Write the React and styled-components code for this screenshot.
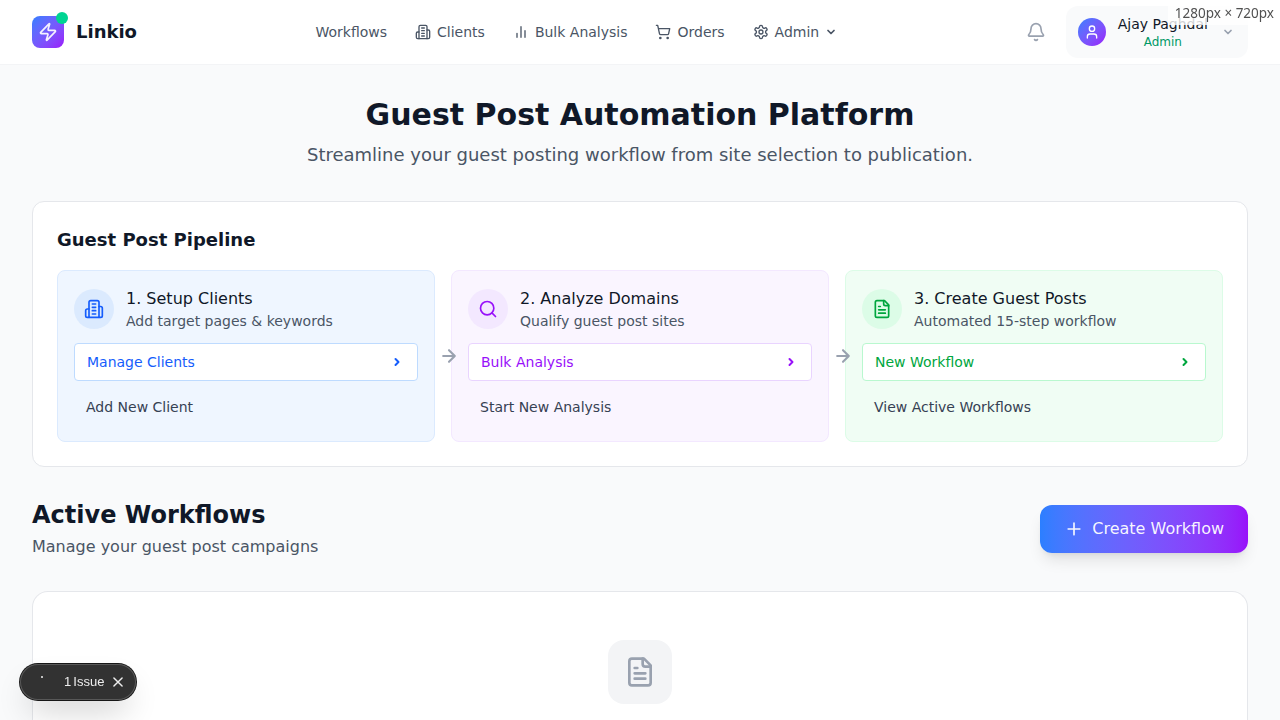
import React from "react";
import styled, { createGlobalStyle } from "styled-components";

const GlobalStyle = createGlobalStyle`
  *, *::before, *::after { box-sizing: border-box; }
  body {
    margin: 0;
    height: 720px;
    overflow: hidden;
    background: #f9fafb;
    color: #101828;
    font-family: "DejaVu Sans", sans-serif;
    font-size: 16px;
    line-height: 24px;
  }
  h1, h2, h3, p { margin: 0; }
  svg { display: block; flex: none; }
`;

const tones = {
  blue: { bg: "#eff6ff", soft: "#dbeafe", line: "#bedbff", ink: "#155dfc" },
  purple: { bg: "#faf5ff", soft: "#f3e8ff", line: "#e9d4ff", ink: "#9810fa" },
  green: { bg: "#f0fdf4", soft: "#dcfce7", line: "#b9f8cf", ink: "#00a63e" },
};

const paths = {
  zap: <path d="M4 14a1 1 0 0 1-.78-1.63l9.9-10.2a.5.5 0 0 1 .86.46l-1.92 6.02A1 1 0 0 0 13 10h7a1 1 0 0 1 .78 1.63l-9.9 10.2a.5.5 0 0 1-.86-.46l1.92-6.02A1 1 0 0 0 11 14z" />,
  building: (
    <>
      <path d="M6 22V4a2 2 0 0 1 2-2h8a2 2 0 0 1 2 2v18Z" />
      <path d="M6 12H4a2 2 0 0 0-2 2v6a2 2 0 0 0 2 2h2" />
      <path d="M18 9h2a2 2 0 0 1 2 2v9a2 2 0 0 1-2 2h-2" />
      <path d="M10 6h4M10 10h4M10 14h4M10 18h4" />
    </>
  ),
  bars: <path d="M18 20V10M12 20V4M6 20v-6" />,
  cart: (
    <>
      <circle cx="8" cy="21" r="1" />
      <circle cx="19" cy="21" r="1" />
      <path d="M2.05 2.05h2l2.66 12.42a2 2 0 0 0 2 1.58h9.78a2 2 0 0 0 1.95-1.57l1.65-7.43H5.12" />
    </>
  ),
  settings: (
    <>
      <path d="M12.22 2h-.44a2 2 0 0 0-2 2v.18a2 2 0 0 1-1 1.73l-.43.25a2 2 0 0 1-2 0l-.15-.08a2 2 0 0 0-2.73.73l-.22.38a2 2 0 0 0 .73 2.73l.15.1a2 2 0 0 1 1 1.72v.51a2 2 0 0 1-1 1.74l-.15.09a2 2 0 0 0-.73 2.73l.22.38a2 2 0 0 0 2.73.73l.15-.08a2 2 0 0 1 2 0l.43.25a2 2 0 0 1 1 1.73V20a2 2 0 0 0 2 2h.44a2 2 0 0 0 2-2v-.18a2 2 0 0 1 1-1.73l.43-.25a2 2 0 0 1 2 0l.15.08a2 2 0 0 0 2.73-.73l.22-.39a2 2 0 0 0-.73-2.73l-.15-.08a2 2 0 0 1-1-1.74v-.5a2 2 0 0 1 1-1.74l.15-.09a2 2 0 0 0 .73-2.73l-.22-.38a2 2 0 0 0-2.73-.73l-.15.08a2 2 0 0 1-2 0l-.43-.25a2 2 0 0 1-1-1.73V4a2 2 0 0 0-2-2z" />
      <circle cx="12" cy="12" r="3" />
    </>
  ),
  chevronDown: <path d="m6 9 6 6 6-6" />,
  chevronRight: <path d="m9 18 6-6-6-6" />,
  arrowRight: <path d="M5 12h14m-7-7 7 7-7 7" />,
  bell: (
    <>
      <path d="M10.268 21a2 2 0 0 0 3.464 0" />
      <path d="M3.262 15.326A1 1 0 0 0 4 17h16a1 1 0 0 0 .74-1.673C19.41 13.956 18 12.499 18 8A6 6 0 0 0 6 8c0 4.499-1.411 5.956-2.738 7.326" />
    </>
  ),
  user: (
    <>
      <path d="M19 21v-2a4 4 0 0 0-4-4H9a4 4 0 0 0-4 4v2" />
      <circle cx="12" cy="7" r="4" />
    </>
  ),
  search: (
    <>
      <circle cx="11" cy="11" r="8" />
      <path d="m21 21-4.3-4.3" />
    </>
  ),
  file: (
    <>
      <path d="M15 2H6a2 2 0 0 0-2 2v16a2 2 0 0 0 2 2h12a2 2 0 0 0 2-2V7Z" />
      <path d="M14 2v4a2 2 0 0 0 2 2h4M10 9H8M16 13H8M16 17H8" />
    </>
  ),
  plus: <path d="M5 12h14M12 5v14" />,
  close: <path d="M5 5l14 14M19 5 5 19" />,
};

function Icon({ name, size = 16, stroke = 2 }) {
  return (
    <svg width={size} height={size} viewBox="0 0 24 24" fill="none" stroke="currentColor"
      strokeWidth={stroke} strokeLinecap="round" strokeLinejoin="round" aria-hidden="true">
      {paths[name]}
    </svg>
  );
}

const Header = styled.header`
  display: flex;
  align-items: center;
  justify-content: space-between;
  height: 65px;
  padding: 0 32px;
  background: #fff;
  border-bottom: 1px solid #f3f4f6;
`;

const Brand = styled.div`
  display: flex;
  align-items: center;
  gap: 12px;
  font-size: 18px;
  font-weight: 700;
`;

const Logo = styled.div`
  position: relative;
  display: grid;
  place-items: center;
  width: 32px;
  height: 32px;
  border-radius: 8px;
  color: rgba(255, 255, 255, 0.92);
  background: linear-gradient(to bottom right in oklab, #2b7fff, #9810fa);
`;

const StatusDot = styled.span`
  position: absolute;
  top: -4px;
  right: -4px;
  width: 12px;
  height: 12px;
  border-radius: 50%;
  background: #00d492;
`;

const Nav = styled.nav`
  display: flex;
  gap: 4px;
  margin-right: 10px;
`;

const NavItem = styled.a`
  display: flex;
  align-items: center;
  gap: 6px;
  padding: 8px 12px;
  color: #4a5565;
  font-size: 14px;
  line-height: 20px;
`;

const Account = styled.div`
  display: flex;
  align-items: center;
  gap: 20px;
  color: #99a1af;
`;

const UserButton = styled.div`
  display: flex;
  align-items: center;
  gap: 12px;
  padding: 8px 12px;
  border-radius: 12px;
  background: #f9fafb;
`;

const Avatar = styled.div`
  display: grid;
  place-items: center;
  width: 28px;
  height: 28px;
  border-radius: 50%;
  color: #fff;
  background: linear-gradient(to bottom right in oklab, #2b7fff, #9810fa);
`;

const UserText = styled.div`
  text-align: center;
  font-size: 14px;
  line-height: 20px;
  color: #101828;
`;

const Role = styled.div`
  font-size: 12px;
  line-height: 16px;
  color: #009966;
`;

const ChevronSlot = styled.span`
  display: grid;
  place-items: center;
  width: 16px;
  height: 16px;
`;

const ViewportSize = styled.div`
  position: fixed;
  top: 0;
  right: 0;
  width: 112px;
  height: 25px;
  padding: 4px 6px;
  background: rgba(255, 255, 255, 0.8);
  color: #505050;
  font: 13.5px/18px "Noto Sans", sans-serif;
  display: flex;
  justify-content: flex-end;
  white-space: nowrap;
`;

const Main = styled.main`
  padding: 32px 32px 0;
`;

const Hero = styled.section`
  margin-bottom: 32px;
  text-align: center;
`;

const HeroTitle = styled.h1`
  margin-bottom: 8px;
  font-size: 30px;
  line-height: 36px;
`;

const HeroText = styled.p`
  color: #4a5565;
  font-size: 18px;
  line-height: 28px;
`;

const Pipeline = styled.section`
  margin-bottom: 32px;
  padding: 24px;
  border: 1px solid #e5e7eb;
  border-radius: 12px;
  background: #fff;
`;

const PipelineTitle = styled.h2`
  margin-bottom: 16px;
  font-size: 18px;
  line-height: 28px;
`;

const Steps = styled.div`
  display: grid;
  grid-template-columns: repeat(3, 1fr);
  gap: 16px;
`;

const StepCard = styled.article`
  position: relative;
  padding: 16px;
  border: 1px solid ${(p) => tones[p.$tone].soft};
  border-radius: 8px;
  background: ${(p) => tones[p.$tone].bg};
`;

const StepHead = styled.div`
  display: flex;
  align-items: center;
  gap: 12px;
  margin-bottom: 12px;
`;

const StepIcon = styled.div`
  display: grid;
  place-items: center;
  width: 40px;
  height: 40px;
  border-radius: 50%;
  color: ${(p) => tones[p.$tone].ink};
  background: ${(p) => tones[p.$tone].soft};
`;

const StepTitle = styled.h3`
  font-size: 16px;
  font-weight: 500;
  line-height: 24px;
`;

const StepText = styled.p`
  color: #4a5565;
  font-size: 14px;
  line-height: 20px;
`;

const PrimaryLink = styled.a`
  display: flex;
  align-items: center;
  justify-content: space-between;
  margin-bottom: 8px;
  padding: 8px 12px;
  border: 1px solid ${(p) => tones[p.$tone].line};
  border-radius: 4px;
  background: #fff;
  color: ${(p) => tones[p.$tone].ink};
  font-size: 14px;
  line-height: 20px;
`;

const SecondaryLink = styled.a`
  display: block;
  padding: 8px 12px;
  color: #364153;
  font-size: 14px;
  line-height: 20px;
`;

const Connector = styled.span`
  position: absolute;
  top: 50%;
  right: -25px;
  z-index: 1;
  transform: translateY(-50%);
  color: #99a1af;
`;

const SectionHead = styled.div`
  display: flex;
  align-items: center;
  justify-content: space-between;
  margin-bottom: 32px;
`;

const SectionTitle = styled.h2`
  margin-bottom: 4px;
  font-size: 24px;
  line-height: 32px;
`;

const SectionText = styled.p`
  color: #4a5565;
`;

const CreateButton = styled.a`
  display: flex;
  align-items: center;
  gap: 8px;
  padding: 12px 24px;
  border-radius: 12px;
  color: rgba(255, 255, 255, 0.94);
  background: linear-gradient(to right in oklab, #2b7fff, #9810fa);
  box-shadow: 0 10px 15px -3px rgba(0, 0, 0, 0.1), 0 4px 6px -4px rgba(0, 0, 0, 0.1);
`;

const EmptyState = styled.section`
  display: flex;
  justify-content: center;
  height: 129px;
  padding: 48px 48px 0;
  border: 1px solid #e5e7eb;
  border-bottom: 0;
  border-radius: 16px 16px 0 0;
  background: #fff;
`;

const EmptyIcon = styled.div`
  display: grid;
  place-items: center;
  width: 64px;
  height: 64px;
  border-radius: 16px;
  background: #f3f4f6;
  color: #99a1af;
`;

const IssuePill = styled.div`
  position: fixed;
  left: 20px;
  bottom: 20px;
  display: flex;
  align-items: center;
  width: 116px;
  height: 36px;
  padding-left: 20px;
  border-radius: 18px;
  background: #323232;
  color: #ededed;
  font: 13px/18px "Liberation Sans", sans-serif;
  box-shadow: 0 0 0 1px #171717, inset 0 0 0 1px #585858,
    0 16px 32px -8px rgba(0, 0, 0, 0.24);
`;

const LoadingDot = styled.span`
  width: 2px;
  height: 2px;
  margin: -10px 21px 0 1px;
  background: #c0c0c0;
`;

const IssueText = styled.span`
  width: 47px;
  white-space: nowrap;
  word-spacing: -1.5px;
`;

const navItems = [
  { label: "Workflows" },
  { label: "Clients", icon: "building" },
  { label: "Bulk Analysis", icon: "bars" },
  { label: "Orders", icon: "cart" },
  { label: "Admin", icon: "settings", menu: true },
];

const steps = [
  { tone: "blue", icon: "building", title: "1. Setup Clients", text: "Add target pages & keywords", primary: "Manage Clients", secondary: "Add New Client" },
  { tone: "purple", icon: "search", title: "2. Analyze Domains", text: "Qualify guest post sites", primary: "Bulk Analysis", secondary: "Start New Analysis" },
  { tone: "green", icon: "file", title: "3. Create Guest Posts", text: "Automated 15-step workflow", primary: "New Workflow", secondary: "View Active Workflows" },
];

export default function App() {
  return (
    <>
      <GlobalStyle />
      <Header>
        <Brand>
          <Logo><Icon name="zap" size={20} /><StatusDot /></Logo>
          Linkio
        </Brand>
        <Nav>
          {navItems.map((item) => (
            <NavItem key={item.label}>
              {item.icon && <Icon name={item.icon} />}
              {item.label}
              {item.menu && <Icon name="chevronDown" size={12} stroke={3.5} />}
            </NavItem>
          ))}
        </Nav>
        <Account>
          <Icon name="bell" size={20} />
          <UserButton>
            <Avatar><Icon name="user" size={16} /></Avatar>
            <UserText>Ajay Paghdal<Role>Admin</Role></UserText>
            <ChevronSlot><Icon name="chevronDown" size={12} stroke={3.5} /></ChevronSlot>
          </UserButton>
        </Account>
      </Header>
      <Main>
        <Hero>
          <HeroTitle>Guest Post Automation Platform</HeroTitle>
          <HeroText>Streamline your guest posting workflow from site selection to publication.</HeroText>
        </Hero>
        <Pipeline>
          <PipelineTitle>Guest Post Pipeline</PipelineTitle>
          <Steps>
            {steps.map((s, i) => (
              <StepCard key={s.tone} $tone={s.tone}>
                <StepHead>
                  <StepIcon $tone={s.tone}><Icon name={s.icon} size={20} /></StepIcon>
                  <div>
                    <StepTitle>{s.title}</StepTitle>
                    <StepText>{s.text}</StepText>
                  </div>
                </StepHead>
                <PrimaryLink $tone={s.tone}>
                  {s.primary}
                  <ChevronSlot><Icon name="chevronRight" size={12} stroke={4} /></ChevronSlot>
                </PrimaryLink>
                <SecondaryLink>{s.secondary}</SecondaryLink>
                {i < 2 && <Connector><Icon name="arrowRight" size={20} stroke={2.5} /></Connector>}
              </StepCard>
            ))}
          </Steps>
        </Pipeline>
        <SectionHead>
          <div>
            <SectionTitle>Active Workflows</SectionTitle>
            <SectionText>Manage your guest post campaigns</SectionText>
          </div>
          <CreateButton><Icon name="plus" size={20} />Create Workflow</CreateButton>
        </SectionHead>
        <EmptyState>
          <EmptyIcon><Icon name="file" size={32} /></EmptyIcon>
        </EmptyState>
      </Main>
      <ViewportSize>1280px × 720px</ViewportSize>
      <IssuePill>
        <LoadingDot />
        <IssueText>1 Issue</IssueText>
        <Icon name="close" size={14} stroke={2.5} />
      </IssuePill>
    </>
  );
}
